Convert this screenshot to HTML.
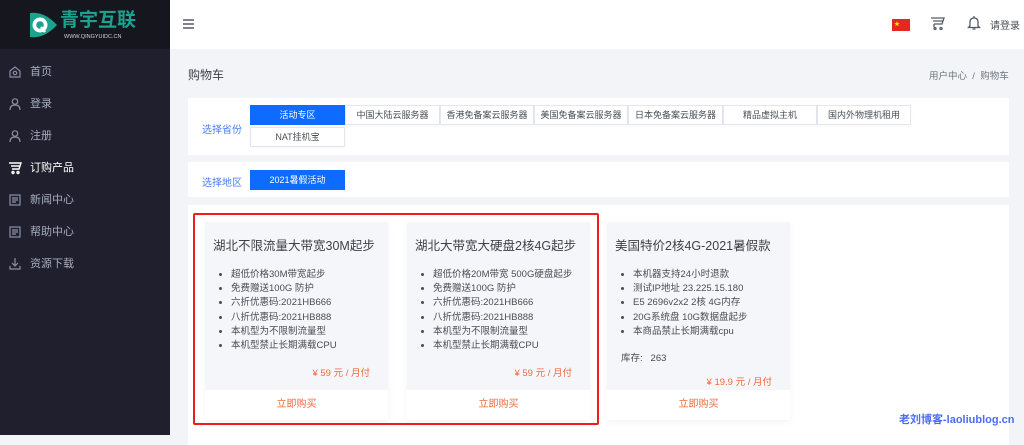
<!DOCTYPE html>
<html><head><meta charset="utf-8"><style>
*{margin:0;padding:0;box-sizing:border-box}
body{width:1024px;height:435px;overflow:hidden;background:#f3f4f8;font-family:"Liberation Sans","Noto Sans CJK SC",sans-serif;position:relative;color:#495057}
.abs{position:absolute}
.side{left:0;top:0;width:170px;height:435px;background:#1f1f2d}
.logo{left:0;top:0;width:170px;height:49px;background:#16161f}
.nav{left:0;width:170px;height:32px;color:#a8adbd;font-size:11px;line-height:32px;padding-left:30px}
.nav svg{position:absolute;left:8px;top:9px}
.hdr{left:170px;top:0;width:854px;height:49px;background:#fff}
.panel{background:#fff;left:188px;width:821px}
.tab{position:absolute;height:20px;font-size:9px;line-height:19px;text-align:center;border:1px solid #e3e6ef;background:#fff;color:#495057;box-shadow:0 1px 3px rgba(0,0,0,.04)}
.tab.on{background:#0e6bff;color:#fff;border-color:#0e6bff}
.lbl{position:absolute;font-size:10px;color:#4d7cf5}
.card{position:absolute;top:222px;width:183px;height:198px;background:#f5f6f9;box-shadow:0 2px 6px rgba(0,0,0,.05)}
.card h3{position:absolute;left:8px;top:13px;font-size:12.5px;font-weight:normal;color:#3e4147;white-space:nowrap}
.card ul{position:absolute;left:26px;top:46px;font-size:9.5px;line-height:14.2px;color:#4a4d55;white-space:nowrap}
.card .pr{position:absolute;right:18px;font-size:9.5px;color:#f06a3d}
.card .buy{position:absolute;left:0;bottom:0;width:100%;height:30px;background:#fff;text-align:center;line-height:30px;font-size:10px;color:#f06a3d}
</style></head><body>
<div class="abs side"></div>
<div class="abs logo">
<svg class="abs" style="left:28px;top:11px" width="30" height="28" viewBox="0 0 30 28"><path d="M2 2 Q16 0 29 14 Q16 28 2 26 Z" fill="#1aa38d"/><circle cx="12" cy="14" r="7.5" fill="#fff"/><circle cx="12" cy="14" r="3.8" fill="#1aa38d"/><path d="M13 16 L17 21" stroke="#fff" stroke-width="2.5"/></svg>
<div class="abs" style="left:60px;top:11px;font-size:19px;line-height:20px;font-weight:bold;color:#1aa38d;letter-spacing:0px">青宇互联</div>
<div class="abs" style="left:64px;top:34px;font-size:5.5px;line-height:6px;color:#cfd3da">WWW.QINGYUIDC.CN</div>
</div>
<div class="abs nav" style="top:56px"><svg width="14" height="14" viewBox="0 0 14 14" fill="none" stroke="#8a90a3" stroke-width="1.2"><path d="M2 6 L7 2 L12 6 V12 H2 Z"/><circle cx="7" cy="8" r="1.7"/></svg>首页</div>
<div class="abs nav" style="top:88px"><svg width="14" height="14" viewBox="0 0 14 14" fill="none" stroke="#8a90a3" stroke-width="1.2"><circle cx="7" cy="4.5" r="2.7"/><path d="M2 13 Q2 8 7 8 Q12 8 12 13"/></svg>登录</div>
<div class="abs nav" style="top:120px"><svg width="14" height="14" viewBox="0 0 14 14" fill="none" stroke="#8a90a3" stroke-width="1.2"><circle cx="7" cy="4.5" r="2.7"/><path d="M2 13 Q2 8 7 8 Q12 8 12 13"/></svg>注册</div>
<div class="abs nav" style="top:152px;color:#fff"><svg width="14" height="14" viewBox="0 0 14 14" fill="none" stroke="#fff" stroke-width="1.4"><path d="M1 2 H13 L11 8 H4 M3 5 H12"/><circle cx="5" cy="11.5" r="1"/><circle cx="10" cy="11.5" r="1"/></svg>订购产品</div>
<div class="abs nav" style="top:184px"><svg width="14" height="14" viewBox="0 0 14 14" fill="none" stroke="#8a90a3" stroke-width="1.2"><rect x="2" y="2" width="10" height="10"/><path d="M4 5 H10 M4 7 H10 M4 9 H8"/></svg>新闻中心</div>
<div class="abs nav" style="top:216px"><svg width="14" height="14" viewBox="0 0 14 14" fill="none" stroke="#8a90a3" stroke-width="1.2"><rect x="2" y="2" width="10" height="10"/><path d="M4 5 H10 M4 7 H10 M4 9 H8"/></svg>帮助中心</div>
<div class="abs nav" style="top:248px"><svg width="14" height="14" viewBox="0 0 14 14" fill="none" stroke="#8a90a3" stroke-width="1.2"><path d="M7 1 V9 M4 6 L7 9 L10 6 M2 9 V12 H12 V9"/></svg>资源下载</div>

<div class="abs hdr">
<svg class="abs" style="left:13px;top:19px" width="11" height="10" viewBox="0 0 11 10" stroke="#555b66" stroke-width="1.5"><path d="M0 1 H11 M0 5 H11 M0 9 H11"/></svg>
<div class="abs" style="left:722px;top:19px;width:18px;height:12px;background:#e5281d"><span style="position:absolute;left:2px;top:0;color:#ffde00;font-size:6px">★</span></div>
<svg class="abs" style="left:760px;top:16px" width="15" height="15" viewBox="0 0 15 15" fill="none" stroke="#555b66" stroke-width="1.3"><path d="M1 2 H14 L12 8 H4 M3 5 H13 M4 8 V11"/><circle cx="5" cy="12.5" r="1"/><circle cx="11" cy="12.5" r="1"/></svg>
<svg class="abs" style="left:797px;top:15px" width="14" height="16" viewBox="0 0 14 16" fill="none" stroke="#555b66" stroke-width="1.3"><path d="M3 11 V7 Q3 3 7 3 Q11 3 11 7 V11 L12.5 12.5 H1.5 Z M5.5 14 H8.5 M7 1 V3"/></svg>
<div class="abs" style="left:820px;top:17px;font-size:10px;color:#495057">请登录</div>
</div>

<div class="abs" style="left:188px;top:66px;font-size:12px;color:#3e4147">购物车</div>
<div class="abs" style="left:929px;top:68px;font-size:9.5px;color:#6c757d">用户中心 &nbsp;/&nbsp; 购物车</div>

<div class="abs panel" style="top:98px;height:57px">
<div class="lbl" style="left:14px;top:23px">选择省份</div>
<div class="tab on" style="left:62px;top:7px;width:95px">活动专区</div>
<div class="tab" style="left:157px;top:7px;width:95px">中国大陆云服务器</div>
<div class="tab" style="left:252px;top:7px;width:94px">香港免备案云服务器</div>
<div class="tab" style="left:346px;top:7px;width:94px">美国免备案云服务器</div>
<div class="tab" style="left:440px;top:7px;width:95px">日本免备案云服务器</div>
<div class="tab" style="left:535px;top:7px;width:94px">精品虚拟主机</div>
<div class="tab" style="left:629px;top:7px;width:94px">国内外物理机租用</div>
<div class="tab" style="left:62px;top:29px;width:95px">NAT挂机宝</div>
</div>
<div class="abs panel" style="top:162px;height:35px">
<div class="lbl" style="left:14px;top:12px">选择地区</div>
<div class="tab on" style="left:62px;top:8px;width:95px">2021暑假活动</div>
</div>
<div class="abs panel" style="top:205px;height:240px"></div>

<div class="card" style="left:205px"><h3>湖北不限流量大带宽30M起步</h3>
<ul><li>超低价格30M带宽起步</li><li>免费赠送100G 防护</li><li>六折优惠码:2021HB666</li><li>八折优惠码:2021HB888</li><li>本机型为不限制流量型</li><li>本机型禁止长期满载CPU</li></ul>
<div class="pr" style="top:143px">¥ 59 元 / 月付</div><div class="buy">立即购买</div></div>
<div class="card" style="left:407px"><h3>湖北大带宽大硬盘2核4G起步</h3>
<ul><li>超低价格20M带宽 500G硬盘起步</li><li>免费赠送100G 防护</li><li>六折优惠码:2021HB666</li><li>八折优惠码:2021HB888</li><li>本机型为不限制流量型</li><li>本机型禁止长期满载CPU</li></ul>
<div class="pr" style="top:143px">¥ 59 元 / 月付</div><div class="buy">立即购买</div></div>
<div class="card" style="left:607px"><h3>美国特价2核4G-2021暑假款</h3>
<ul><li>本机器支持24小时退款</li><li>测试IP地址 23.225.15.180</li><li>E5 2696v2x2 2核 4G内存</li><li>20G系统盘 10G数据盘起步</li><li>本商品禁止长期满载cpu</li></ul>
<div class="abs" style="left:14px;top:128px;font-size:9.5px;color:#4a4d55">库存: &nbsp; 263</div>
<div class="pr" style="top:152px">¥ 19.9 元 / 月付</div><div class="buy">立即购买</div></div>

<div class="abs" style="left:193px;top:213px;width:406px;height:212px;border:2px solid #f01c1c;border-radius:2px"></div>
<div class="abs" style="left:899px;top:411px;font-size:11px;font-weight:bold;color:#4a6cf7">老刘博客-laoliublog.cn</div>
</body></html>
